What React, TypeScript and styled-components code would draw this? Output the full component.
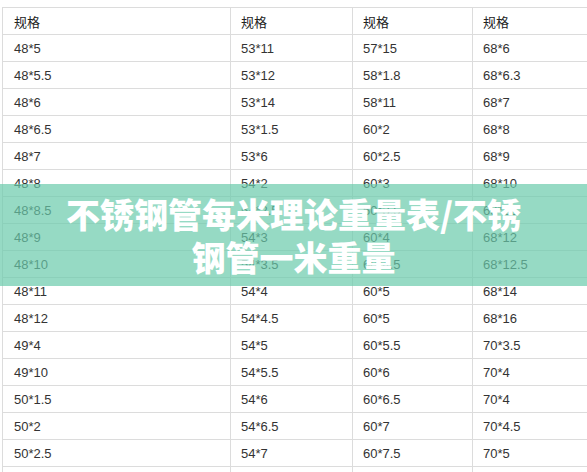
import React from 'react';
import styled, { createGlobalStyle } from 'styled-components';

const GlobalStyle = createGlobalStyle`
  html, body {
    margin: 0;
    padding: 0;
    background: #ffffff;
  }
  body {
    font-family: 'Liberation Sans', Arial, 'Noto Sans CJK SC', sans-serif;
  }
`;

const Page = styled.div`
  position: relative;
  width: 587px;
  height: 472px;
  overflow: hidden;
  background: #ffffff;
  padding-top: 7px;
  box-sizing: border-box;
`;

const Table = styled.div`
  margin-left: 2px;
  width: 620px;
  border-top: 1px solid #dcdcdc;
  border-left: 1px solid #dcdcdc;
`;

const Row = styled.div`
  display: grid;
  grid-template-columns: 228px 122px 120px 1fr;
  height: 27px;
`;

const Cell = styled.div<{ $head?: boolean }>`
  box-sizing: border-box;
  display: flex;
  align-items: center;
  padding-left: 10px;
  border-right: 1px solid #dcdcdc;
  border-bottom: 1px solid #dcdcdc;
  font-size: 13px;
  color: ${p => (p.$head ? '#222' : '#333')};
  font-family: ${p =>
    p.$head
      ? "'Noto Sans CJK SC', sans-serif"
      : "'Liberation Sans', Arial, sans-serif"};
  white-space: nowrap;

  &:first-child {
    padding-left: 11px;
  }
`;

const Banner = styled.div`
  position: absolute;
  left: 0;
  right: 0;
  top: 184px;
  height: 102px;
  background: rgba(105, 202, 171, 0.7);
  display: flex;
  align-items: center;
  justify-content: center;
`;

const Title = styled.h1`
  margin: 0;
  max-width: 480px;
  text-align: center;
  color: #ffffff;
  font-family: 'Noto Sans CJK SC', sans-serif;
  font-weight: 900;
  font-size: 34px;
  line-height: 43px;
  letter-spacing: 0;
`;

const rows: string[][] = [
  ['48*5', '53*11', '57*15', '68*6'],
  ['48*5.5', '53*12', '58*1.8', '68*6.3'],
  ['48*6', '53*14', '58*11', '68*7'],
  ['48*6.5', '53*1.5', '60*2', '68*8'],
  ['48*7', '53*6', '60*2.5', '68*9'],
  ['48*8', '54*2', '60*3', '68*10'],
  ['48*8.5', '54*2.5', '60*3.5', '68*11'],
  ['48*9', '54*3', '60*4', '68*12'],
  ['48*10', '54*3.5', '60*4.5', '68*12.5'],
  ['48*11', '54*4', '60*5', '68*14'],
  ['48*12', '54*4.5', '60*5', '68*16'],
  ['49*4', '54*5', '60*5.5', '70*3.5'],
  ['49*10', '54*5.5', '60*6', '70*4'],
  ['50*1.5', '54*6', '60*6.5', '70*4'],
  ['50*2', '54*6.5', '60*7', '70*4.5'],
  ['50*2.5', '54*7', '60*7.5', '70*5'],
  ['', '', '', ''],
];

const App: React.FC = () => {
  return (
    <>
      <GlobalStyle />
      <Page>
        <Table>
          <Row>
            {[0, 1, 2, 3].map(i => (
              <Cell key={i} $head>规格</Cell>
            ))}
          </Row>
          {rows.map((r, i) => (
            <Row key={i}>
              {r.map((v, j) => (
                <Cell key={j}>{v}</Cell>
              ))}
            </Row>
          ))}
        </Table>
        <Banner>
          <Title>不锈钢管每米理论重量表/不锈钢管一米重量</Title>
        </Banner>
      </Page>
    </>
  );
};

export default App;
